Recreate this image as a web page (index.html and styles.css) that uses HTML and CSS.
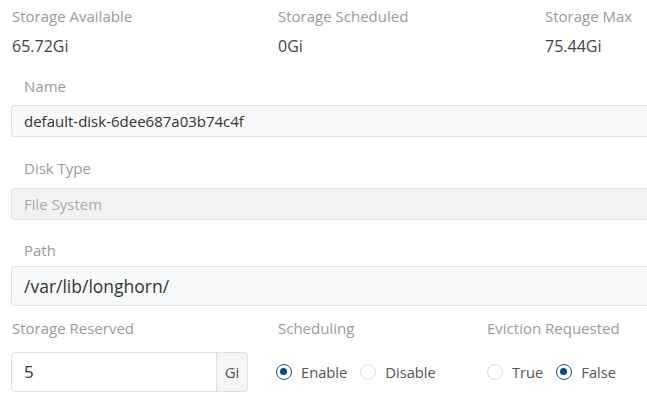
FILE: index.html
```html
<!DOCTYPE html>
<html>
<head>
<meta charset="utf-8">
<link rel="stylesheet" href="styles.css">
</head>
<body>
<div class="page">
  <div class="stats">
    <div class="stat">
      <div class="lbl">Storage Available</div>
      <div class="val">65.72Gi</div>
    </div>
    <div class="stat">
      <div class="lbl">Storage Scheduled</div>
      <div class="val">0Gi</div>
    </div>
    <div class="stat">
      <div class="lbl">Storage Max</div>
      <div class="val">75.44Gi</div>
    </div>
  </div>

  <div class="field f-name">
    <div class="flabel">Name</div>
    <div class="input">default-disk-6dee687a03b74c4f</div>
  </div>

  <div class="field f-type">
    <div class="flabel">Disk Type</div>
    <div class="input disabled">File System</div>
  </div>

  <div class="field f-path">
    <div class="flabel">Path</div>
    <div class="input large">/var/lib/longhorn/</div>
  </div>

  <div class="bottom">
    <div class="col col-res">
      <div class="lbl">Storage Reserved</div>
      <div class="group">
        <div class="gin">5</div>
        <div class="addon">Gi</div>
      </div>
    </div>
    <div class="col col-sched">
      <div class="lbl">Scheduling</div>
      <div class="radios">
        <span class="radio on"></span><span class="rtext">Enable</span>
        <span class="radio"></span><span class="rtext">Disable</span>
      </div>
    </div>
    <div class="col col-evict">
      <div class="lbl">Eviction Requested</div>
      <div class="radios">
        <span class="radio"></span><span class="rtext">True</span>
        <span class="radio on"></span><span class="rtext">False</span>
      </div>
    </div>
  </div>
</div>
</body>
</html>
```

FILE: styles.css
```css
html, body {
  margin: 0;
  padding: 0;
  background: #fff;
}
body {
  font-family: "Open Sans", "Noto Sans", sans-serif;
  font-size: 15px;
  color: #555;
  width: 647px;
  height: 400px;
  overflow: hidden;
}
.page {
  padding-left: 11px;
  width: 636px;
  overflow: hidden;
}
.stats {
  display: grid;
  grid-template-columns: 266px 267px 1fr;
  padding-top: 6px;
  padding-left: 1px;
}
.lbl {
  line-height: 20px;
  color: #9a9a9a;
  white-space: nowrap;
}
.val {
  line-height: 20px;
  margin-top: 10px;
  font-size: 16px;
  color: #444;
}
.field .flabel {
  line-height: 20px;
  color: #9a9a9a;
  padding-left: 13px;
}
.f-name { margin-top: 20px; }
.f-name .input { margin-top: 9px; }
.f-type { margin-top: 21px; }
.f-type .input { margin-top: 10px; }
.f-path { margin-top: 20px; }
.f-path .input { margin-top: 6px; }
.input {
  box-sizing: border-box;
  width: 700px;
  height: 32px;
  border: 1px solid #e0e0e0;
  border-right: none;
  border-radius: 4px 0 0 4px;
  background: #f8f9fa;
  padding-left: 12px;
  line-height: 30px;
  font-size: 15px;
  color: #333;
}
.input.disabled {
  background: #f2f2f2;
  color: #aaa;
}
.input.large {
  height: 40px;
  line-height: 38px;
  font-size: 17.5px;
  color: #333;
}
.bottom {
  display: flex;
  margin-top: 12px;
  padding-left: 1px;
}
.col-res { width: 266px; }
.col-sched { width: 209px; }
.group {
  display: flex;
  margin-top: 14px;
  margin-left: -1px;
  width: 237px;
  height: 40px;
  box-sizing: border-box;
}
.gin {
  flex: 1;
  box-sizing: border-box;
  border: 1px solid #e0e0e0;
  border-radius: 4px 0 0 4px;
  padding-left: 12px;
  line-height: 38px;
  font-size: 17px;
  color: #333;
  background: #fff;
}
.addon {
  width: 31px;
  box-sizing: border-box;
  border: 1px solid #e0e0e0;
  border-left: none;
  border-radius: 0 4px 4px 0;
  background: #f5f5f5;
  text-align: center;
  line-height: 38px;
  color: #555;
}
.radios {
  display: flex;
  align-items: center;
  height: 40px;
  margin-top: 14px;
  margin-left: -2px;
  font-size: 14.7px;
}
.col-evict .radios { margin-left: 0; }
.radio {
  box-sizing: border-box;
  width: 16px;
  height: 16px;
  border-radius: 50%;
  border: 1px solid #ddd;
  background: #fff;
  position: relative;
  flex: none;
}
.radio.on {
  border: 1.5px solid #1a4f7a;
}
.radio.on::after {
  content: "";
  position: absolute;
  left: 3px;
  top: 3px;
  width: 7px;
  height: 7px;
  border-radius: 50%;
  background: #0f4a7d;
}
.rtext {
  margin-left: 9px;
  margin-right: 13px;
  color: #555;
}
```
